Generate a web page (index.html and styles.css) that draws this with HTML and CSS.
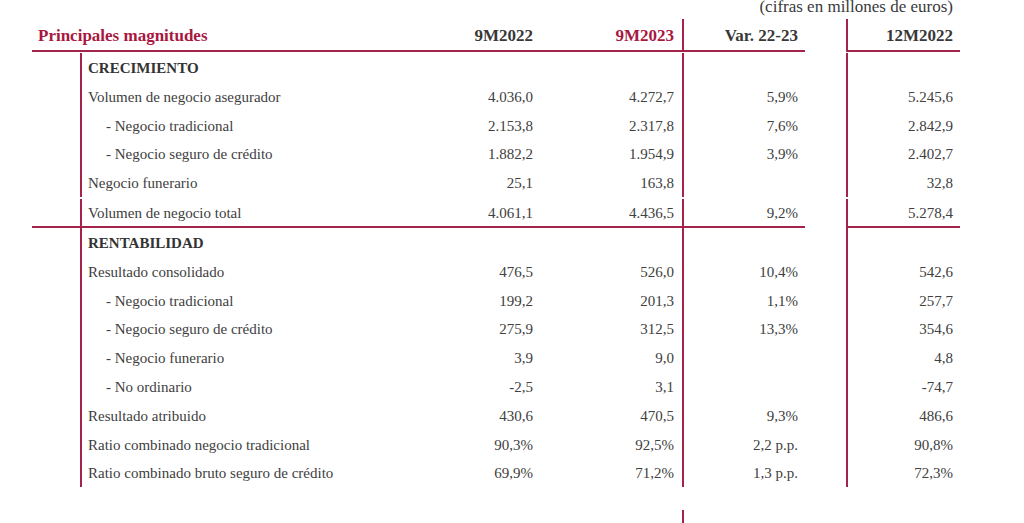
FILE: index.html
```html
<!DOCTYPE html>
<html lang="es">
<head>
<meta charset="utf-8">
<title>Principales magnitudes</title>
<link rel="stylesheet" href="styles.css">
</head>
<body>
<div class="page">
  <div class="caption">(cifras en millones de euros)</div>
  <div class="table">
    <div class="row head">
      <div class="c title">Principales magnitudes</div>
      <div class="c n1">9M2022</div>
      <div class="c n2 accent">9M2023</div>
      <div class="c var">Var. 22-23</div>
      <div class="c gap"></div>
      <div class="c y">12M2022</div>
    </div>

    <div class="section first">
      <div class="row"><div class="c ind"></div><div class="c lbl sec">CRECIMIENTO</div><div class="c n1"></div><div class="c n2"></div><div class="c var"></div><div class="c gap"></div><div class="c y"></div></div>
      <div class="row"><div class="c ind"></div><div class="c lbl">Volumen de negocio asegurador</div><div class="c n1">4.036,0</div><div class="c n2">4.272,7</div><div class="c var">5,9%</div><div class="c gap"></div><div class="c y">5.245,6</div></div>
      <div class="row"><div class="c ind"></div><div class="c lbl sub">- Negocio tradicional</div><div class="c n1">2.153,8</div><div class="c n2">2.317,8</div><div class="c var">7,6%</div><div class="c gap"></div><div class="c y">2.842,9</div></div>
      <div class="row"><div class="c ind"></div><div class="c lbl sub">- Negocio seguro de crédito</div><div class="c n1">1.882,2</div><div class="c n2">1.954,9</div><div class="c var">3,9%</div><div class="c gap"></div><div class="c y">2.402,7</div></div>
      <div class="row"><div class="c ind"></div><div class="c lbl">Negocio funerario</div><div class="c n1">25,1</div><div class="c n2">163,8</div><div class="c var"></div><div class="c gap"></div><div class="c y">32,8</div></div>
    </div>

    <div class="section">
      <div class="row total"><div class="c ind"></div><div class="c lbl">Volumen de negocio total</div><div class="c n1">4.061,1</div><div class="c n2">4.436,5</div><div class="c var">9,2%</div><div class="c gap"></div><div class="c y">5.278,4</div></div>
    </div>

    <div class="section">
      <div class="row"><div class="c ind"></div><div class="c lbl sec">RENTABILIDAD</div><div class="c n1"></div><div class="c n2"></div><div class="c var"></div><div class="c gap"></div><div class="c y"></div></div>
      <div class="row"><div class="c ind"></div><div class="c lbl">Resultado consolidado</div><div class="c n1">476,5</div><div class="c n2">526,0</div><div class="c var">10,4%</div><div class="c gap"></div><div class="c y">542,6</div></div>
      <div class="row"><div class="c ind"></div><div class="c lbl sub">- Negocio tradicional</div><div class="c n1">199,2</div><div class="c n2">201,3</div><div class="c var">1,1%</div><div class="c gap"></div><div class="c y">257,7</div></div>
      <div class="row"><div class="c ind"></div><div class="c lbl sub">- Negocio seguro de crédito</div><div class="c n1">275,9</div><div class="c n2">312,5</div><div class="c var">13,3%</div><div class="c gap"></div><div class="c y">354,6</div></div>
      <div class="row"><div class="c ind"></div><div class="c lbl sub">- Negocio funerario</div><div class="c n1">3,9</div><div class="c n2">9,0</div><div class="c var"></div><div class="c gap"></div><div class="c y">4,8</div></div>
      <div class="row"><div class="c ind"></div><div class="c lbl sub">- No ordinario</div><div class="c n1">-2,5</div><div class="c n2">3,1</div><div class="c var"></div><div class="c gap"></div><div class="c y">-74,7</div></div>
      <div class="row"><div class="c ind"></div><div class="c lbl">Resultado atribuido</div><div class="c n1">430,6</div><div class="c n2">470,5</div><div class="c var">9,3%</div><div class="c gap"></div><div class="c y">486,6</div></div>
      <div class="row"><div class="c ind"></div><div class="c lbl">Ratio combinado negocio tradicional</div><div class="c n1">90,3%</div><div class="c n2">92,5%</div><div class="c var">2,2 p.p.</div><div class="c gap"></div><div class="c y">90,8%</div></div>
      <div class="row"><div class="c ind"></div><div class="c lbl">Ratio combinado bruto seguro de crédito</div><div class="c n1">69,9%</div><div class="c n2">71,2%</div><div class="c var">1,3 p.p.</div><div class="c gap"></div><div class="c y">72,3%</div></div>
    </div>

    <div class="row next">
      <div class="c ind"></div><div class="c lbl"></div><div class="c n1"></div><div class="c n2"></div><div class="c var"></div><div class="c gap"></div><div class="c y"></div>
    </div>
  </div>
</div>
</body>
</html>
```

FILE: styles.css
```css
html, body {
  margin: 0;
  padding: 0;
  background: #ffffff;
  overflow: hidden;
}

body {
  font-family: "Liberation Serif", "Times New Roman", serif;
  color: #404040;
}

.page {
  width: 928px;
  margin-left: 32px;
}

.caption {
  width: 921px;
  text-align: right;
  font-size: 17px;
  line-height: 20px;
  margin-top: -3px;
  height: 22px;
  color: #3a3a3a;
}

.row {
  display: grid;
  grid-template-columns: 48px 320px 141px 141px 123px 41px 114px;
  font-size: 15px;
  line-height: 26.8px;
}

.c {
  white-space: nowrap;
  padding-top: 2px;
}

.n1, .n2 {
  text-align: right;
  padding-right: 8px;
}

.var, .y {
  text-align: right;
  padding-right: 7px;
  border-left: 2px solid #a3234a;
}

.lbl {
  border-left: 2px solid #a3234a;
  padding-left: 6px;
}

.lbl.sub {
  padding-left: 24px;
}

.lbl.sec {
  font-weight: bold;
  color: #333333;
}

/* header row */
.head {
  font-size: 17px;
  font-weight: bold;
  line-height: 29px;
  color: #383838;
}

.head .c {
  padding-top: 2px;
  border-bottom: 2px solid #a3234a;
}

.head .gap {
  border-bottom: none;
}

.head .title {
  grid-column: span 2;
  padding-left: 6px;
  color: #a8173f;
}

.head .accent {
  color: #a8173f;
}

.section.first {
  margin-top: 1px;
}

.total {
  margin-top: 2px;
  line-height: 25px;
}

.total .c {
  border-bottom: 2px solid #a3234a;
}

.total .gap {
  border-bottom: none;
}

.next {
  margin-top: 23px;
  line-height: 20px;
}

.next .c {
  height: 20px;
}

.next .lbl,
.next .y {
  border-left: none;
}
```
